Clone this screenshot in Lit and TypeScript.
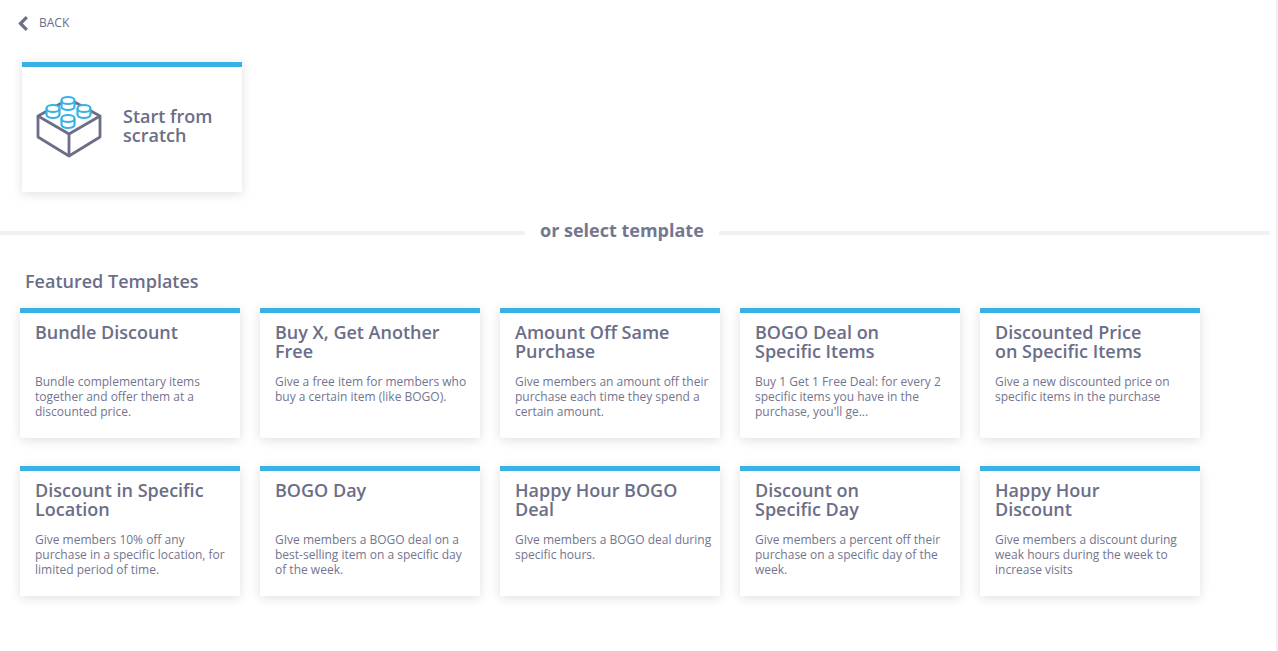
import { LitElement, html, css, svg } from "lit";
import { customElement } from "lit/decorators.js";

const cards = [
  ["Bundle Discount", "Bundle complementary items together and offer them at a discounted price."],
  ["Buy X, Get Another Free", "Give a free item for members who buy a certain item (like BOGO)."],
  ["Amount Off Same Purchase", "Give members an amount off their purchase each time they spend a certain amount."],
  ["BOGO Deal on Specific Items", "Buy 1 Get 1 Free Deal: for every 2 specific items you have in the purchase, you'll ge..."],
  ["Discounted Price on Specific Items", "Give a new discounted price on specific items in the purchase"],
  ["Discount in Specific Location", "Give members 10% off any purchase in a specific location, for limited period of time."],
  ["BOGO Day", "GIve members a BOGO deal on a best-selling item on a specific day of the week."],
  ["Happy Hour BOGO Deal", "GIve members a BOGO deal during specific hours."],
  ["Discount on Specific Day", "Give members a percent off their purchase on a specific day of the week."],
  ["Happy Hour Discount", "Give members a discount during weak hours during the week to increase visits"],
];

const stud = (x: number, y: number) => svg`
  <path d="M${x - 6.5} ${y - 3}c0-2 2.9-3.5 6.5-3.5s6.5 1.500 6.500 3.500v6c0 2-2.900 3.500-6.500 3.500s-6.500-1.500-6.500-3.500z" fill="#fff" stroke="#38b2e4" stroke-width="2.200"/>
  <path d="M${x - 6.5} ${y - 3}c0 2 2.900 3.500 6.500 3.500s6.500-1.500 6.500-3.500" fill="none" stroke="#38b2e4" stroke-width="2"/>`;

@customElement("app-root")
export class AppRoot extends LitElement {
  static styles = css`
    :host {
      display: block;
      height: 651px;
      overflow: hidden;
      background: #fff;
      font-family: "Open Sans", sans-serif;
      color: #6b6e88;
      border-right: 2px solid #eef1f3;
      box-sizing: border-box;
      width: 1278px;
    }
    .back {
      display: flex;
      align-items: center;
      gap: 11px;
      padding: 15px 0 0 18px;
      height: 16px;
      font-size: 12px;
      line-height: 16px;
    }
    .scratch {
      display: flex;
      align-items: center;
      gap: 17px;
      box-sizing: border-box;
      width: 220px;
      height: 130px;
      margin: 31px 0 0 22px;
      padding: 0 0 8px 14px;
      border-top: 5px solid #38b2e4;
      box-shadow: 0 2px 10px rgba(60, 60, 80, 0.16);
    }
    .scratch-label {
      font-size: 18px;
      font-weight: 600;
      line-height: 19px;
    }
    .divider {
      display: flex;
      align-items: center;
      gap: 15px;
      width: 1270px;
      margin-top: 25px;
      height: 26px;
      font-size: 18px;
      font-weight: 700;
      color: #74778f;
    }
    .divider i {
      flex: 1;
      height: 4px;
      margin-top: 5px;
      background: #eef2f4;
    }
    .divider i.lead {
      flex: 0 0 525px;
    }
    h2 {
      margin: 0;
      padding: 26px 0 0 25px;
      font-size: 18px;
      line-height: 25px;
      font-weight: 600;
    }
    .grid {
      display: grid;
      grid-template-columns: repeat(5, 220px);
      grid-auto-rows: 130px;
      gap: 28px 20px;
      margin: 14px 0 0 20px;
    }
    .card {
      box-sizing: border-box;
      padding: 10px 8px 0 15px;
      border-top: 5px solid #38b2e4;
      box-shadow: 0 2px 10px rgba(60, 60, 80, 0.16);
    }
    .card h3 {
      margin: 0;
      width: 171px;
      height: 38px;
      font-size: 18px;
      line-height: 19px;
      font-weight: 600;
    }
    .card p {
      margin: 13px 0 0;
      font-size: 12px;
      line-height: 15px;
      color: #73758f;
    }
  `;

  render() {
    return html`
      <div class="back">
        <svg width="10" height="15" viewBox="0 0 10 15"><path d="M8.800 1.200 2.500 7.500 8.800 13.800" fill="none" stroke="#6b6e88" stroke-width="3.200"/></svg>
        <span>BACK</span>
      </div>
      <div class="scratch">
        <svg width="70" height="66" viewBox="0 0 70 66">
          <path d="M2 23 33 6 64 23 33 41z" fill="none" stroke="#6b6e88" stroke-width="2.800" stroke-linejoin="round"/>
          <path d="M2 23V44L33 63 64 44V23M33 41V63" fill="none" stroke="#6b6e88" stroke-width="2.800" stroke-linejoin="round"/>
          ${stud(32, 10.5)}${stud(17, 18.5)}${stud(48, 18.5)}${stud(32, 28.5)}
        </svg>
        <div class="scratch-label">Start from<br />scratch</div>
      </div>
      <div class="divider"><i class="lead"></i><span>or select template</span><i></i></div>
      <h2>Featured Templates</h2>
      <div class="grid">
        ${cards.map(([t, d]) => html`<div class="card"><h3>${t}</h3><p>${d}</p></div>`)}
      </div>
    `;
  }
}
